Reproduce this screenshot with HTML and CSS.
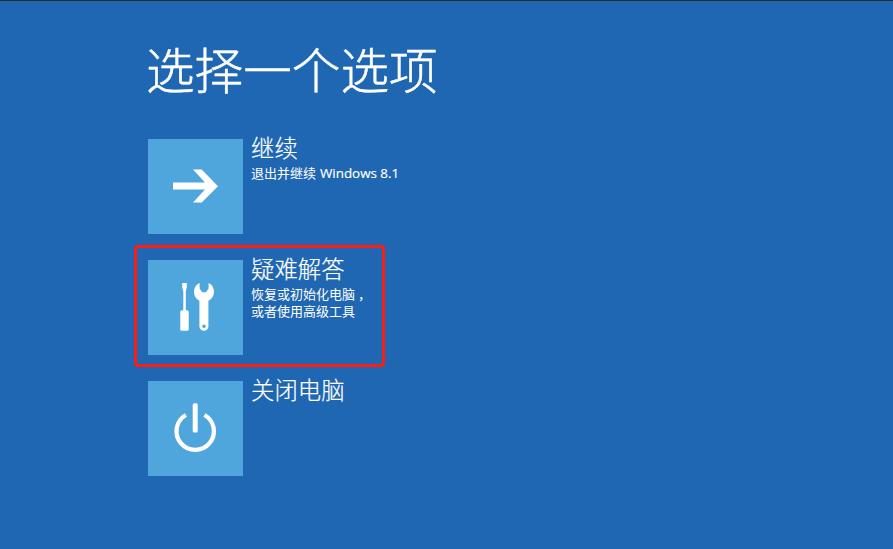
FILE: index.html
```html
<!DOCTYPE html>
<html lang="zh-CN">
<head>
<meta charset="utf-8">
<title>选择一个选项</title>
<link rel="stylesheet" href="styles.css">
</head>
<body>
<main class="screen">
  <h1 class="title">选择一个选项</h1>
  <div class="options">
    <div class="option">
      <svg class="tile" viewBox="0 0 95 95"><path d="M25 43.3H57L45 30.4H53.7L70 47L53.7 63.4H45L57 50.3H25z"/></svg>
      <div class="text">
        <h2 class="name">继续</h2>
        <p class="desc">退出并继续 <span class="latin">Windows 8.1</span></p>
      </div>
    </div>
    <div class="option highlighted">
      <svg class="tile" viewBox="0 0 95 95">
        <path d="M34.2 22.7H38.8V27L37.8 31.5V50H39.2Q40.7 50 40.7 51.5V69Q40.7 70.6 39.2 70.6H33.8Q32.3 70.6 32.3 69V51.5Q32.3 50 33.8 50H35.3V31.5L34.2 27z"/>
        <path fill-rule="evenodd" d="M51.6 22.7V28.3L54.2 32H58L60.6 28.3V22.7C64.2 24.3 66 27.8 66 31.6C66 35.8 63.7 38.8 60.4 40.6V66A4.5 4.5 0 0 1 51.4 66V40.6C48.1 38.8 46 35.8 46 31.6C46 27.8 48 24.3 51.6 22.7zM57.8 66A1.8 1.8 0 1 0 54.2 66A1.8 1.8 0 1 0 57.8 66z"/>
      </svg>
      <div class="text">
        <h2 class="name">疑难解答</h2>
        <p class="desc">恢复或初始化电脑<span class="comma">，</span><br>或者使用高级工具</p>
      </div>
    </div>
    <div class="option">
      <svg class="tile" viewBox="0 0 95 95">
        <path class="ring" d="M37.9 33.8A18.7 18.7 0 1 0 56.5 33.8"/>
        <rect x="44.7" y="22" width="5" height="29.4" rx="1.5"/>
      </svg>
      <div class="text">
        <h2 class="name">关闭电脑</h2>
      </div>
    </div>
  </div>
</main>
</body>
</html>
```
FILE: styles.css
```css
* { box-sizing: border-box; }

body {
  margin: 0;
  background: #1f67b2;
  color: #fff;
  font-family: "Noto Sans CJK SC", sans-serif;
}

.screen {
  height: 549px;
  padding: 32px 0 0 146px;
  border-top: 1px solid #292c30;
  overflow: hidden;
}

.title {
  margin: 0;
  font-size: 48.6px;
  line-height: 70px;
  font-weight: 300;
  -webkit-text-stroke: 0.5px #fff;
  white-space: nowrap;
}

.options {
  display: flex;
  flex-direction: column;
  gap: 26px;
  margin: 36px 0 0 2px;
}

.option {
  position: relative;
  display: flex;
  gap: 8px;
  width: 252px;
  height: 95px;
}

.highlighted::after {
  content: "";
  box-sizing: border-box;
  position: absolute;
  left: -14px;
  top: -15px;
  width: 251px;
  height: 122px;
  border: 3px solid #ff1d10;
  border-radius: 4px;
}

.tile {
  flex: none;
  width: 95px;
  height: 95.4px;
  background: #4fa6dc;
  fill: #fff;
}

.ring {
  fill: none;
  stroke: #fff;
  stroke-width: 4.3;
}

.text { white-space: nowrap; }

.name {
  margin: -4px 0 3px;
  font-size: 23.4px;
  line-height: 25px;
  font-weight: 300;
  -webkit-text-stroke: 0.2px #fff;
}

.desc {
  margin: 0;
  padding-top: 1px;
  font-size: 13px;
  line-height: 17.4px;
}

.latin {
  margin-left: 1px;
  font-family: "Open Sans", "Noto Sans", sans-serif;
  font-size: 13.4px;
  -webkit-text-stroke: 0.15px #fff;
}

.comma { margin-left: 3px; }
```
